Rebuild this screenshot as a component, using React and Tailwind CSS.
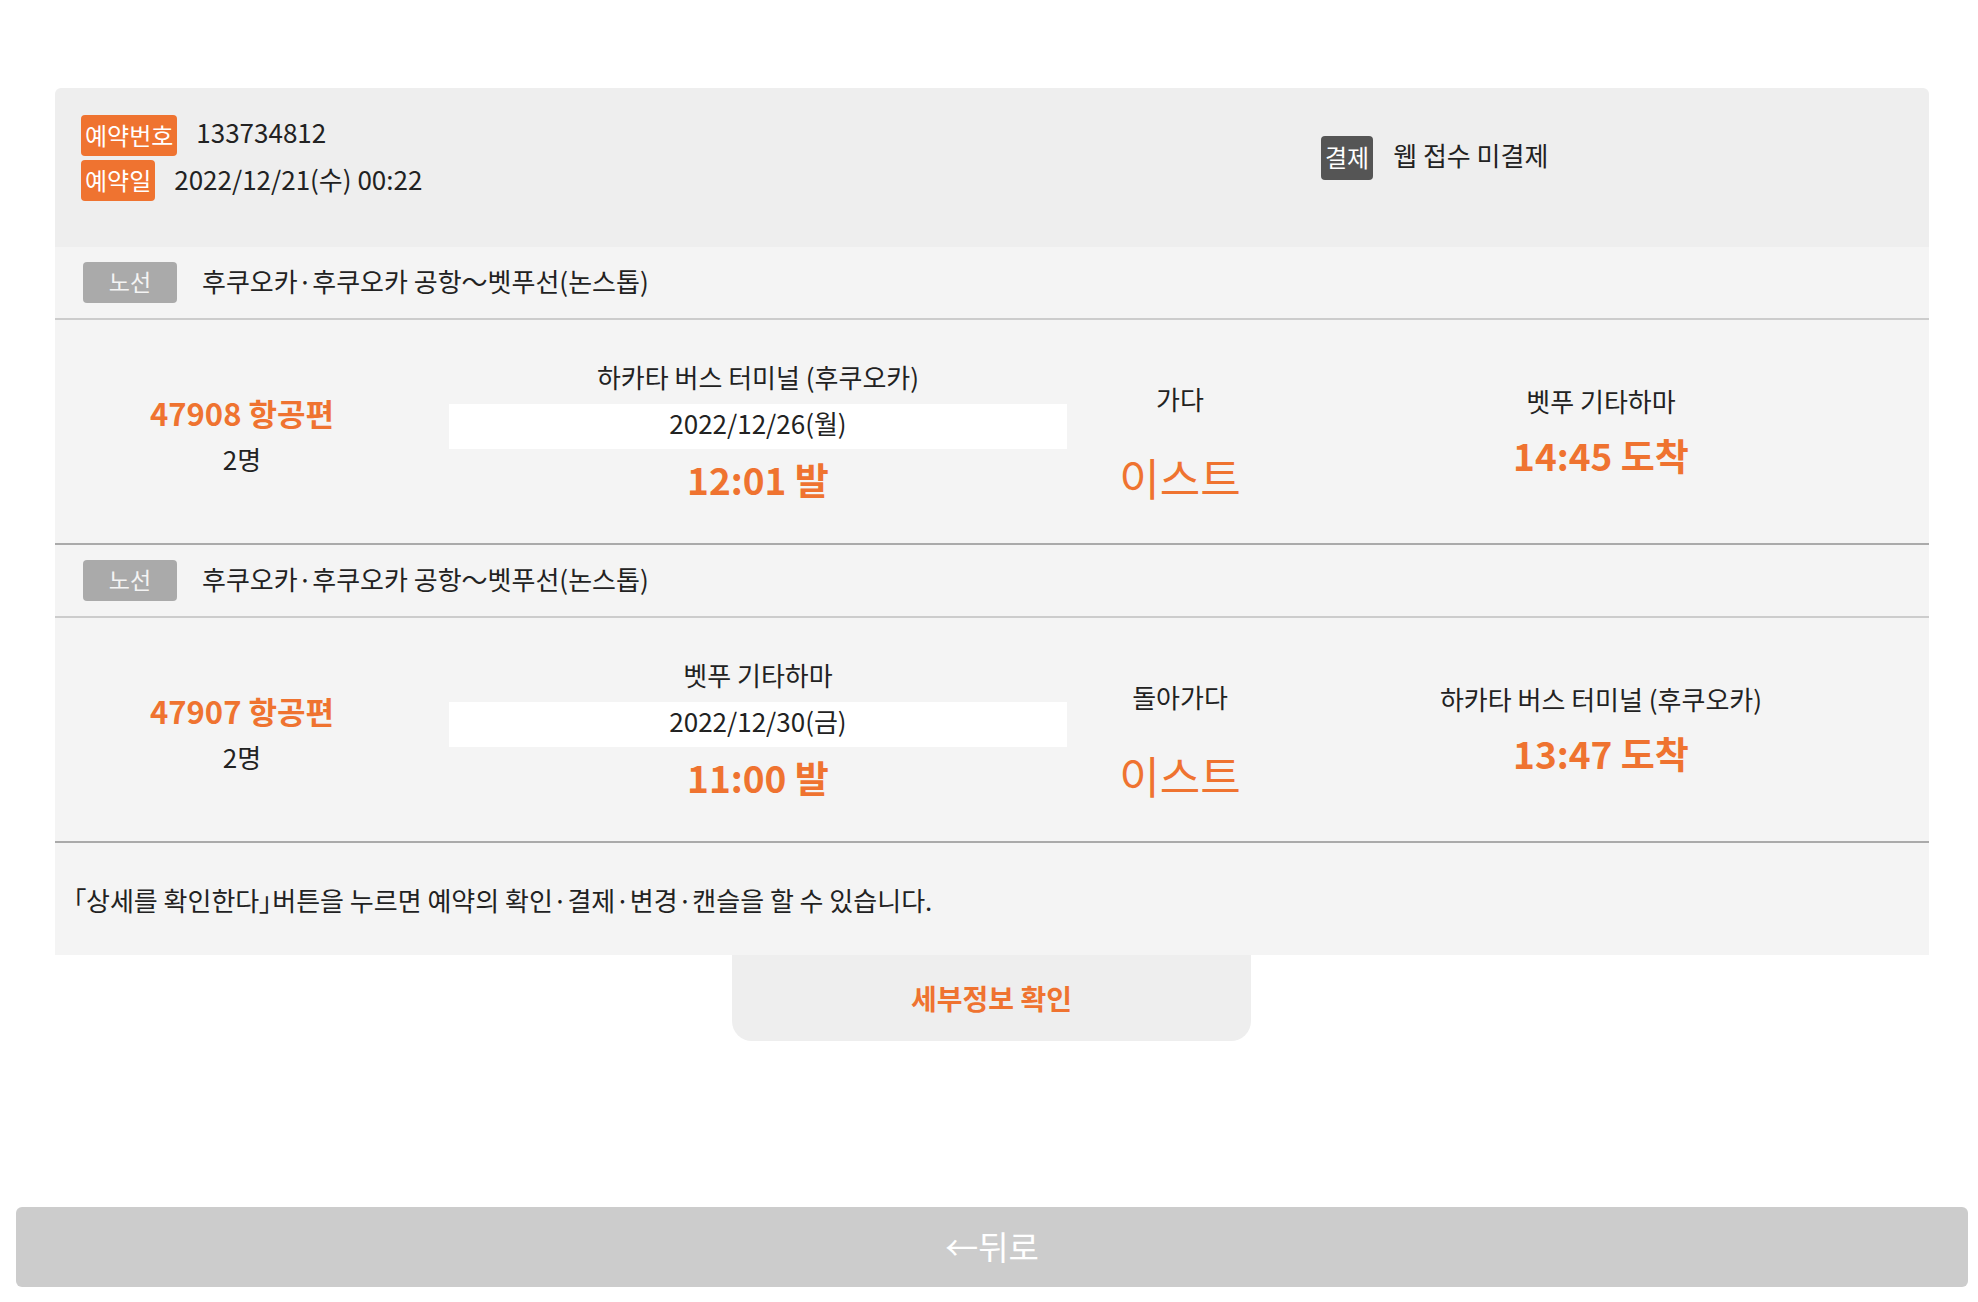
import React from 'react';

const ORANGE = 'text-[#ef7330]';

const segments = [
    {
        route: '후쿠오카·후쿠오카 공항～벳푸선(논스톱)',
        flight: '47908 항공편',
        people: '2명',
        from: '하카타 버스 터미널 (후쿠오카)',
        date: '2022/12/26(월)',
        depart: '12:01 발',
        direction: '가다',
        company: '이스트',
        to: '벳푸 기타하마',
        arrive: '14:45 도착',
    },
    {
        route: '후쿠오카·후쿠오카 공항～벳푸선(논스톱)',
        flight: '47907 항공편',
        people: '2명',
        from: '벳푸 기타하마',
        date: '2022/12/30(금)',
        depart: '11:00 발',
        direction: '돌아가다',
        company: '이스트',
        to: '하카타 버스 터미널 (후쿠오카)',
        arrive: '13:47 도착',
    },
];

const Badge = ({ children, className }) => (
    <span
        className={`inline-flex h-[41px] items-center rounded-[4px] px-[4px] pb-[2px] text-[24px] leading-none text-white ${className}`}
    >
        {children}
    </span>
);

const Segment = ({ seg }) => (
    <>
        {/* Route row */}
        <div className="flex h-[73px] items-center border-b-2 border-[#cccccc] bg-[#f4f4f4] pl-[28px]">
            <span className="inline-flex h-[41px] w-[94px] items-center justify-center rounded-[4px] bg-[#aaaaaa] pb-[2px] text-[23px] text-[#f4f4f4]">
                노선
            </span>
            <span className="ml-[25px] pb-[5px] text-[26px] text-[#222] [font-feature-settings:'palt']">
                {seg.route}
            </span>
        </div>

        {/* Timetable row */}
        <div className="flex h-[225px] items-start border-b-2 border-[#aaaaaa] bg-[#f4f4f4] text-center">
            <div className="w-[374px] pt-[73px]">
                <p className={`text-[31px] font-semibold leading-[40px] ${ORANGE}`}>{seg.flight}</p>
                <p className="mt-[9px] text-[26px] leading-[34px] text-[#222]">{seg.people}</p>
            </div>
            <div className="ml-[20px] w-[618px] pt-[40px]">
                <p className="text-[26px] leading-[34px] text-[#222]">{seg.from}</p>
                <div className="mt-[10px] h-[45px] bg-white text-[26px] leading-[38px] text-[#222]">
                    {seg.date}
                </div>
                <p className={`mt-[6px] text-[37px] font-bold leading-[48px] ${ORANGE}`}>{seg.depart}</p>
            </div>
            <div className="w-[226px] pt-[62px]">
                <p className="text-[26px] leading-[34px] text-[#222]">{seg.direction}</p>
                <p className={`mt-[34px] text-[44px] leading-[54px] ${ORANGE}`}>{seg.company}</p>
            </div>
            <div className="w-[616px] pt-[64px]">
                <p className="text-[26px] leading-[34px] text-[#222]">{seg.to}</p>
                <p className={`mt-[13px] text-[37px] font-bold leading-[48px] ${ORANGE}`}>{seg.arrive}</p>
            </div>
        </div>
    </>
);

const App = () => {
    return (
        <div className="min-h-[1302px] bg-white pt-[88px] font-['Noto_Sans_CJK_KR','Noto_Sans',sans-serif]">
            <div className="ml-[55px] w-[1874px]">
                {/* Reservation header */}
                <div className="h-[159px] rounded-t-[6px] bg-[#eeeeee] pl-[26px] pt-[27px]">
                    <div className="flex items-center">
                        <div className="flex w-[1240px] flex-col gap-[4px]">
                            <div className="flex h-[41px] items-center">
                                <Badge className="bg-[#ef7330]">예약번호</Badge>
                                <span className="mb-[8px] ml-[19px] text-[26px] leading-none text-[#222]">133734812</span>
                            </div>
                            <div className="flex h-[41px] items-center">
                                <Badge className="bg-[#ef7330]">예약일</Badge>
                                <span className="mb-[4px] ml-[19px] text-[26px] leading-none text-[#222]">
                                    2022/12/21(수) 00:22
                                </span>
                            </div>
                        </div>
                        <div className="flex h-[44px] items-center">
                            <Badge className="h-[44px] bg-[#555555]">결제</Badge>
                            <span className="mb-[6px] ml-[20px] text-[26px] leading-none text-[#222]">웹 접수 미결제</span>
                        </div>
                    </div>
                </div>

                {segments.map((seg, i) => (
                    <Segment key={i} seg={seg} />
                ))}

                {/* Note */}
                <div className="flex h-[112px] items-center bg-[#f4f4f4] pl-[18px] text-[26px] text-[#222] [font-feature-settings:'palt']">
                    「상세를 확인한다」버튼을 누르면 예약의 확인·결제·변경·캔슬을 할 수 있습니다.
                </div>
            </div>

            {/* Details button */}
            <div className="ml-[732px] flex h-[86px] w-[519px] items-center justify-center rounded-b-[20px] bg-[#eeeeee]">
                <span className={`text-[28px] font-bold ${ORANGE}`}>세부정보 확인</span>
            </div>

            {/* Back */}
            <div className="ml-[16px] mt-[166px] flex h-[80px] w-[1952px] items-center justify-center rounded-[6px] bg-[#cccccc] text-[33px] text-white">
                ←뒤로
            </div>
        </div>
    );
};

export default App;
